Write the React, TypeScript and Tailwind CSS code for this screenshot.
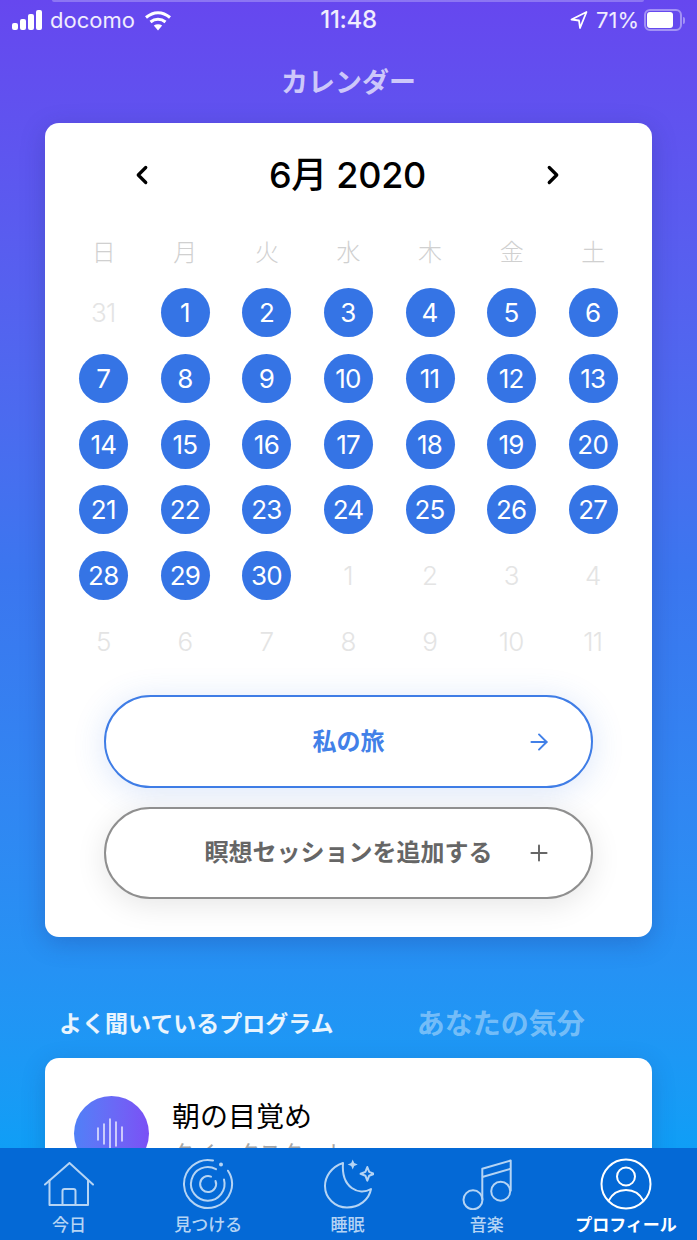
import { ArrowRight, ChevronLeft, ChevronRight, Plus } from 'lucide-react'

const weekDays = ['日', '月', '火', '水', '木', '金', '土']

const days: { n: number; on: boolean }[] = [
  { n: 31, on: false },
  ...Array.from({ length: 30 }, (_, i) => ({ n: i + 1, on: true })),
  ...[1, 2, 3, 4, 5, 6, 7, 8, 9, 10, 11].map((n) => ({ n, on: false })),
]

const StatusBar = () => (
  <div className="flex h-[40px] shrink-0 items-center justify-between pl-[12px] pr-[12px] text-white/90 font-['Inter',sans-serif]">
    <div className="flex w-[220px] items-center">
      <div className="flex items-end gap-[2px]">
        <span className="h-[7px] w-[6px] rounded-[2px] bg-white" />
        <span className="h-[11px] w-[6px] rounded-[2px] bg-white" />
        <span className="h-[16px] w-[6px] rounded-[2px] bg-white" />
        <span className="h-[20px] w-[6px] rounded-[2px] bg-white" />
      </div>
      <span className="ml-[8px] text-[22px]">docomo</span>
      <svg className="ml-[9px]" width="28" height="21" viewBox="0 0 28 21" fill="none" stroke="white" strokeWidth="3">
        <path d="M2 7.5C9.5 1 18.5 1 26 7.5" />
        <path d="M6.5 12C11 8.2 17 8.2 21.5 12" />
        <path d="M14 20.5L9.8 15.6C12.3 13.8 15.7 13.8 18.2 15.6Z" fill="white" stroke="none" />
      </svg>
    </div>
    <span className="text-[24px] font-medium tracking-[-0.3px]">11:48</span>
    <div className="flex w-[220px] items-center justify-end">
      <svg width="18" height="20" viewBox="0 0 18 20" fill="none" stroke="white" strokeWidth="1.8" strokeLinejoin="round">
        <path d="M16.5 2L1.5 9.5L9 10.5L10 18Z" />
      </svg>
      <span className="ml-[8px] text-[22px]">71%</span>
      <div className="ml-[5px] flex h-[22px] w-[38px] items-center rounded-[6px] border-2 border-white/40 p-[1px]">
        <div className="h-full w-[26px] rounded-[3px] bg-white" />
      </div>
      <span className="ml-[1px] h-[7px] w-[2px] rounded-r-full bg-white/40" />
    </div>
  </div>
)

const Calendar = () => (
  <div className="mx-[45px] flex h-[814px] shrink-0 flex-col rounded-[14px] bg-white shadow-[0_6px_24px_rgba(30,40,120,0.25)]">
    <div className="mt-[29px] flex h-[46px] items-center justify-between pl-[82px] pr-[84px]">
      <ChevronLeft size={30} strokeWidth={2.6} className="text-black" />
      <span className="text-[36px] font-medium leading-none tracking-[-0.3px] text-black">6月 2020</span>
      <ChevronRight size={30} strokeWidth={2.6} className="text-black" />
    </div>
    <div className="mt-[36px] grid grid-cols-7 px-[18px]">
      {weekDays.map((d) => (
        <div key={d} className="flex h-[38px] items-center justify-center text-[24px] font-light text-[#d0d0d0]">
          {d}
        </div>
      ))}
    </div>
    <div className="mt-[8px] grid grid-cols-7 auto-rows-[65.7px] px-[18px] font-['Inter',sans-serif]">
      {days.map((d, i) =>
        d.on ? (
          <div key={i} className="flex items-center justify-center">
            <div className="flex h-[49px] w-[49px] items-center justify-center rounded-full bg-[#3574e5] pr-[1px] text-[26px] tracking-[-0.8px] text-white">
              {d.n}
            </div>
          </div>
        ) : (
          <div key={i} className="flex items-center justify-center pr-[1px] text-[26px] font-light tracking-[-0.8px] text-[#e4e4e4]">
            {d.n}
          </div>
        ),
      )}
    </div>
    <div className="mt-[21px] flex flex-col gap-[19px] px-[59px]">
      <div className="relative flex h-[93px] items-center justify-center rounded-full border-2 border-[#3f7de6] bg-white shadow-[0_4px_32px_rgba(53,116,229,0.18)]">
        <span className="text-[24px] font-bold text-[#4280e8]">私の旅</span>
        <ArrowRight size={26} strokeWidth={1.8} className="absolute right-[39px] text-[#4280e8]" />
      </div>
      <div className="relative flex h-[92px] items-center justify-center rounded-full border-2 border-[#8f8f8f] bg-white shadow-[0_6px_30px_rgba(0,0,0,0.1)]">
        <span className="text-[24px] font-bold text-[#666666]">瞑想セッションを追加する</span>
        <Plus size={26} strokeWidth={1.8} className="absolute right-[39px] text-[#666666]" />
      </div>
    </div>
  </div>
)

const HomeIcon = () => (
  <svg width="50" height="44" viewBox="0 0 50 44" fill="none" stroke="currentColor" strokeWidth="2" strokeLinejoin="round" strokeLinecap="round">
    <path d="M1 22.5L25.5 1L49 22.5" />
    <path d="M5.5 18.5V43H44V18.5" />
    <path d="M18.5 43V29C18.5 27.8 19.3 27 20.5 27H29.5C30.7 27 31.5 27.8 31.5 29V43" />
  </svg>
)

const DiscoverIcon = () => (
  <svg width="52" height="52" viewBox="0 0 52 52" fill="none" stroke="currentColor" strokeWidth="2" strokeLinecap="round">
    <path d="M31 2.5A24 24 0 1 0 46 12.7" />
    <path d="M34 11.2A16.8 16.8 0 1 0 42 21.5" />
    <path d="M29 18.6A8 8 0 1 0 33.5 23" />
    <circle cx="39" cy="6.5" r="2" fill="currentColor" stroke="none" />
  </svg>
)

const SleepIcon = () => (
  <svg width="52" height="52" viewBox="-1 0 52 52" fill="none" stroke="currentColor" strokeWidth="2" strokeLinejoin="round">
    <path d="M20 5C8 9 2 19 2 28C2 40 12 49.5 24 49.5C36 49.5 46 42 48 31C36 38 18 30 20 5Z" />
    <path d="M29.7 1.5L31.2 5L34.7 6.5L31.2 8L29.7 11.5L28.2 8L24.7 6.5L28.2 5Z" fill="currentColor" stroke="none" />
    <path d="M44.3 9L46.2 13.9L51 15.8L46.2 17.7L44.3 22.6L42.4 17.7L37.6 15.8L42.4 13.9Z" />
  </svg>
)

const MusicIcon = () => (
  <svg width="52" height="52" viewBox="0 0 52 52" fill="none" stroke="currentColor" strokeWidth="2" strokeLinejoin="round">
    <circle cx="12" cy="41.8" r="9.5" />
    <circle cx="39.7" cy="33.2" r="9.5" />
    <path d="M21.3 41.8V10.8L49.7 2.5V33.2" />
    <path d="M21.3 19L49.7 10.8" />
  </svg>
)

const ProfileIcon = () => (
  <svg width="52" height="52" viewBox="0 0 52 52" fill="none" stroke="currentColor" strokeWidth="2">
    <circle cx="26" cy="26" r="24.5" />
    <circle cx="26" cy="18.5" r="9" />
    <path d="M8.4 43C12 36 18 32 26 32C34 32 40 36 43.6 43" />
  </svg>
)

const tabs = [
  { label: '今日', icon: <HomeIcon />, active: false },
  { label: '見つける', icon: <DiscoverIcon />, active: false },
  { label: '睡眠', icon: <SleepIcon />, active: false },
  { label: '音楽', icon: <MusicIcon />, active: false },
  { label: 'プロフィール', icon: <ProfileIcon />, active: true },
]

const TabBar = () => (
  <div className="flex h-[92px] shrink-0 justify-between bg-[#0469d6] pl-[4px] pr-[6px] pt-[9px]">
    {tabs.map((t) => (
      <div key={t.label} className={`flex w-[130px] flex-col items-center ${t.active ? 'text-white' : 'text-[#b5d4f4]'}`}>
        <div className="flex h-[53px] items-center justify-center">{t.icon}</div>
        <span className={`mt-[3px] text-[17px] leading-[24px] ${t.active ? 'font-bold' : 'font-medium'}`}>{t.label}</span>
      </div>
    ))}
  </div>
)

const App = () => {
  return (
    <div className="relative flex h-[1240px] w-[697px] flex-col overflow-hidden font-['Inter','Noto_Sans_CJK_JP',sans-serif]">
      <div className="relative flex min-h-0 flex-1 flex-col overflow-hidden bg-gradient-to-b from-[#6647ef] via-[#3b76ef] to-[#0f9ef6]">
        <div className="absolute left-[52px] right-[53px] top-0 h-[2px] rounded-b bg-white/25" />
        <StatusBar />
        <div className="flex h-[83px] shrink-0 items-center justify-center pt-[4px] text-[27px] font-bold text-white/70">
          カレンダー
        </div>
        <Calendar />
        <div className="mt-[67px] flex h-[40px] shrink-0 items-center pl-[59px]">
          <span className="text-[23px] font-bold text-white/90">よく聞いているプログラム</span>
          <span className="ml-[83px] text-[28px] font-bold text-white/40">あなたの気分</span>
        </div>
        <div className="mx-[45px] mt-[14px] flex h-[200px] shrink-0 rounded-[14px] bg-white pl-[29px] pt-[38px] shadow-[0_6px_24px_rgba(30,40,120,0.2)]">
          <div className="flex h-[75px] w-[75px] items-center justify-center rounded-full bg-gradient-to-r from-[#4f80f7] to-[#7a50f5]">
            <svg width="36" height="36" viewBox="0 0 36 36" stroke="white" strokeWidth="1.3" strokeLinecap="round">
              <path d="M4 12V24M10 8V28M16 3V33M22 6V30M28 11V25" />
            </svg>
          </div>
          <div className="ml-[23px] flex flex-col">
            <span className="text-[28px] leading-[42px] text-black">朝の目覚め</span>
            <span className="text-[22px] leading-[30px] text-[#a6a6a6]">クイックスタート</span>
          </div>
        </div>
      </div>
      <TabBar />
    </div>
  )
}

export default App
